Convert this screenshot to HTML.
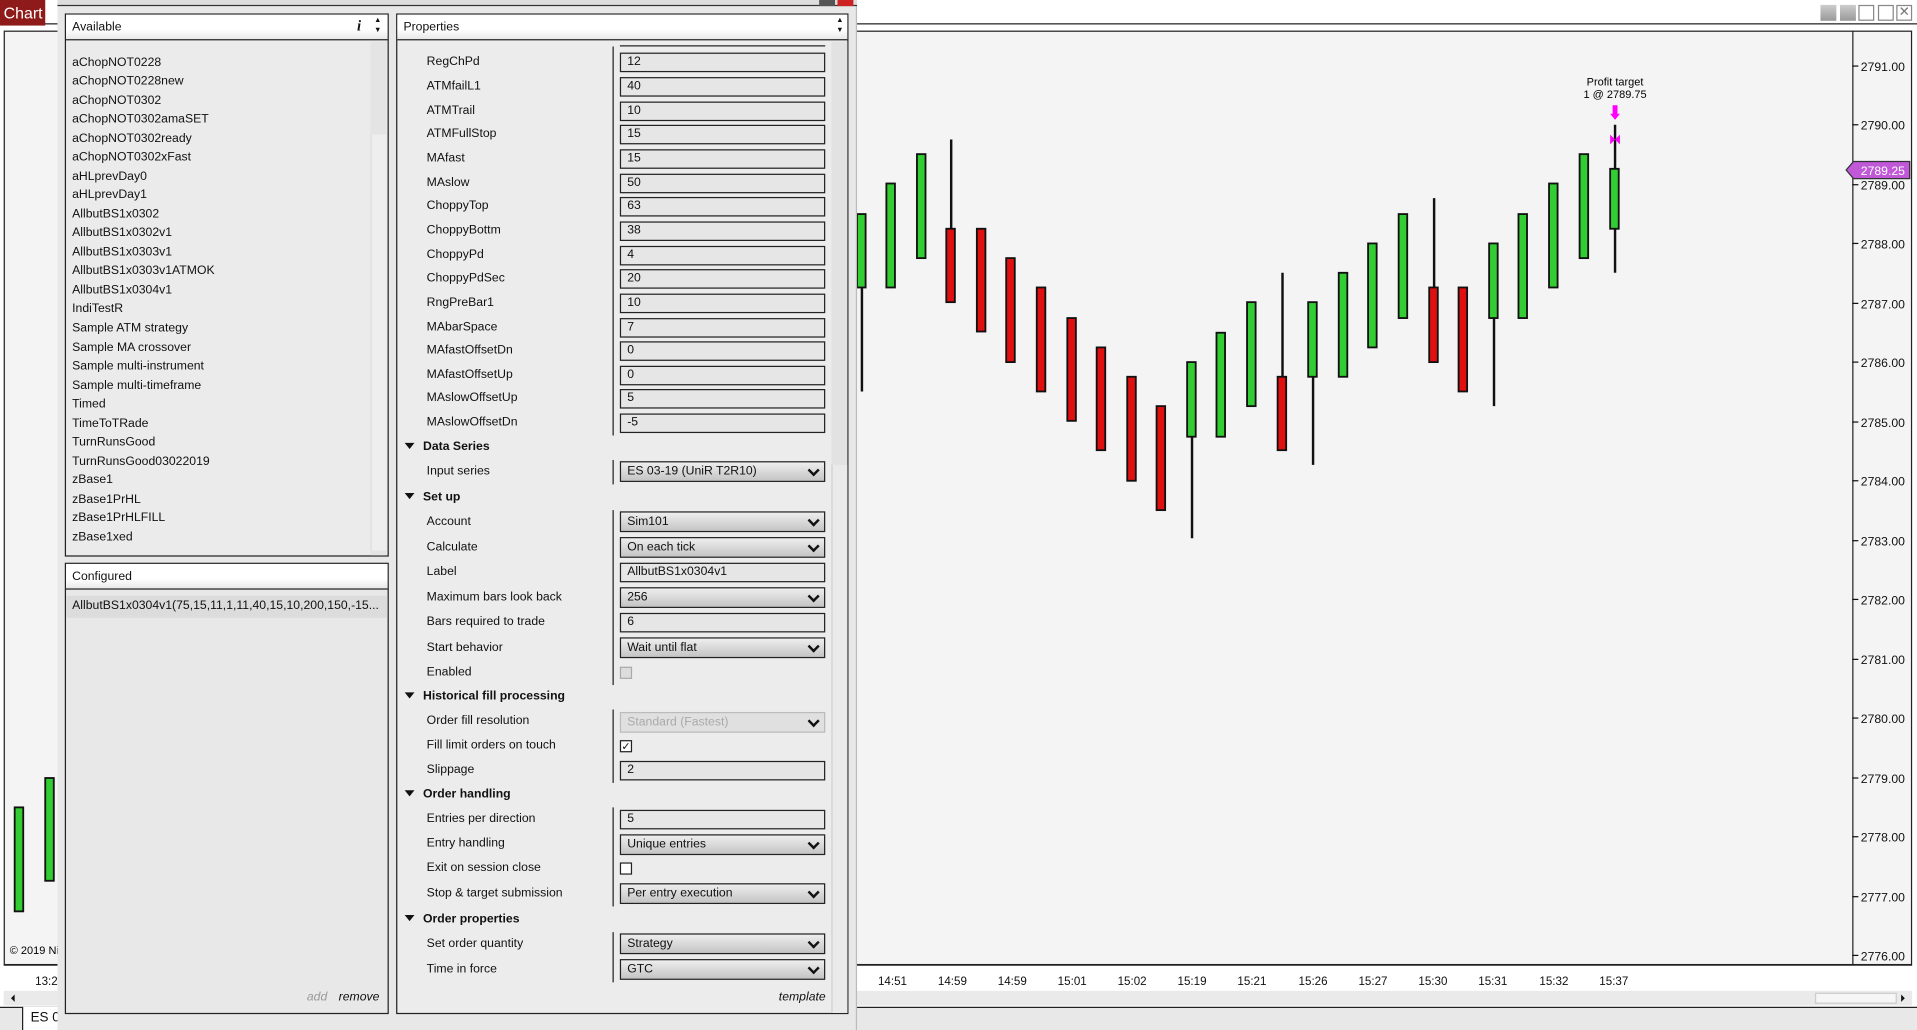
<!DOCTYPE html>
<html><head><meta charset="utf-8"><style>
*{margin:0;padding:0;box-sizing:border-box}
body{width:1917px;height:1030px;overflow:hidden;background:#fff;font-family:"Liberation Sans",Arial,sans-serif;}
#w{position:absolute;left:0;top:0;width:1568px;height:842px;transform:scale(1.2226,1.2233);transform-origin:0 0;font-size:10px;color:#111}
.a{position:absolute}
.lbl{position:absolute;left:349px;line-height:14px;white-space:nowrap}
.hdr{position:absolute;left:331px;font-weight:bold;line-height:14px;white-space:nowrap}
.hdr:before{content:"";display:inline-block;border-left:4px solid transparent;border-right:4px solid transparent;border-top:5px solid #111;margin-right:7px;vertical-align:1px}
.tb{position:absolute;left:507px;width:168px;height:16px;border:1px solid #222;background:#e6e6e6;padding-left:5px;line-height:14px}
.dd{position:absolute;left:507px;width:168px;height:17px;border:1px solid #222;background:linear-gradient(#eee,#c4c4c4);padding-left:5px;line-height:15px}
.dd:after{content:"";position:absolute;right:5px;top:3px;width:5px;height:5px;border-right:2px solid #111;border-bottom:2px solid #111;transform:rotate(45deg)}
.div{position:absolute;left:501px;width:1px;background:#222}
.li{position:absolute;left:59px;white-space:nowrap;line-height:14px}
.ph{background:linear-gradient(#fff 60%,#e8e8e8);border-bottom:1px solid #222}
</style></head><body><div id="w">
<div class="a" style="left:0;top:0;width:1568px;height:20px;background:#fff;border-bottom:1px solid #222"></div>
<div class="a" style="left:0;top:0;width:37px;height:21px;background:#8f1a1a;color:#fff;font-size:13px;line-height:21px;padding-left:3px">Chart</div>
<div class="a" style="left:1489px;top:4px;width:13px;height:13px;background:linear-gradient(#ccc,#999)"></div>
<div class="a" style="left:1505px;top:4px;width:13px;height:13px;background:linear-gradient(#ccc,#999)"></div>
<div class="a" style="left:1520px;top:4px;width:13px;height:13px;border:1px solid #888;background:#fff"></div>
<div class="a" style="left:1536px;top:4px;width:13px;height:13px;border:1px solid #888;background:#fff"></div>
<div class="a" style="left:1551px;top:4px;width:13px;height:13px;border:1px solid #888;background:#fff;font-size:11px;line-height:11px;text-align:center;color:#777">✕</div>
<div class="a" style="left:0;top:21px;width:1568px;height:821px;background:#fff"></div>
<div class="a" style="left:3px;top:25px;width:1561px;height:764px;border:1px solid #222;background:#f4f4f4"></div>
<div class="a" style="left:1515px;top:25px;width:1px;height:764px;background:#222"></div>
<svg class="a" style="left:0;top:0" width="1568" height="842" font-family="Liberation Sans,Arial,sans-serif" font-size="10">
<g stroke="#111" stroke-width="1">
<line x1="1515" y1="54" x2="1520" y2="54"/><line x1="1515" y1="102" x2="1520" y2="102"/><line x1="1515" y1="151" x2="1520" y2="151"/><line x1="1515" y1="199" x2="1520" y2="199"/><line x1="1515" y1="248" x2="1520" y2="248"/><line x1="1515" y1="296" x2="1520" y2="296"/><line x1="1515" y1="345" x2="1520" y2="345"/><line x1="1515" y1="393" x2="1520" y2="393"/><line x1="1515" y1="442" x2="1520" y2="442"/><line x1="1515" y1="490" x2="1520" y2="490"/><line x1="1515" y1="539" x2="1520" y2="539"/><line x1="1515" y1="587" x2="1520" y2="587"/><line x1="1515" y1="636" x2="1520" y2="636"/><line x1="1515" y1="684" x2="1520" y2="684"/><line x1="1515" y1="733" x2="1520" y2="733"/><line x1="1515" y1="781" x2="1520" y2="781"/>
</g>
<g fill="#111">
<text x="1522" y="58">2791.00</text><text x="1522" y="106">2790.00</text><text x="1522" y="155">2789.00</text><text x="1522" y="203">2788.00</text><text x="1522" y="252">2787.00</text><text x="1522" y="300">2786.00</text><text x="1522" y="349">2785.00</text><text x="1522" y="397">2784.00</text><text x="1522" y="446">2783.00</text><text x="1522" y="494">2782.00</text><text x="1522" y="543">2781.00</text><text x="1522" y="591">2780.00</text><text x="1522" y="640">2779.00</text><text x="1522" y="688">2778.00</text><text x="1522" y="737">2777.00</text><text x="1522" y="785">2776.00</text>
</g>
<path d="M1510 139 L1516 132 H1562 V146 H1516 Z" fill="#c058d8" stroke="#333"/>
<text x="1522" y="143" fill="#fff">2789.25</text>
<line x1="3" y1="789" x2="1564" y2="789" stroke="#222"/>
<g fill="#111" text-anchor="middle" font-size="9.5">
<text x="38" y="805">13:2</text><text x="730" y="805">14:51</text><text x="779" y="805">14:59</text><text x="828" y="805">14:59</text><text x="877" y="805">15:01</text><text x="926" y="805">15:02</text><text x="975" y="805">15:19</text><text x="1024" y="805">15:21</text><text x="1074" y="805">15:26</text><text x="1123" y="805">15:27</text><text x="1172" y="805">15:30</text><text x="1221" y="805">15:31</text><text x="1271" y="805">15:32</text><text x="1320" y="805">15:37</text>
</g>
<g stroke="#111" stroke-width="2">
<line x1="705" y1="175" x2="705" y2="320"/><line x1="778" y1="114" x2="778" y2="247"/><line x1="975" y1="296" x2="975" y2="440"/><line x1="1049" y1="223" x2="1049" y2="368"/><line x1="1074" y1="247" x2="1074" y2="380"/><line x1="1173" y1="162" x2="1173" y2="296"/><line x1="1222" y1="199" x2="1222" y2="332"/><line x1="1321" y1="102" x2="1321" y2="223"/>
</g>
<g stroke="#111" stroke-width="1.5" fill="#32cd32">
<rect x="12" y="660" width="7" height="85"/><rect x="37" y="636" width="7" height="84"/>
<rect x="701" y="175" width="7" height="60"/><rect x="725" y="150" width="7" height="85"/><rect x="750" y="126" width="7" height="85"/>
<rect x="971" y="296" width="7" height="61"/><rect x="995" y="272" width="7" height="85"/><rect x="1020" y="247" width="7" height="85"/>
<rect x="1070" y="247" width="7" height="61"/><rect x="1095" y="223" width="7" height="85"/><rect x="1119" y="199" width="7" height="85"/><rect x="1144" y="175" width="7" height="85"/>
<rect x="1218" y="199" width="7" height="61"/><rect x="1242" y="175" width="7" height="85"/><rect x="1267" y="150" width="7" height="85"/><rect x="1292" y="126" width="7" height="85"/><rect x="1317" y="138" width="7" height="49"/>
</g>
<g stroke="#111" stroke-width="1.5" fill="#e01010">
<rect x="774" y="187" width="7" height="60"/><rect x="799" y="187" width="7" height="84"/><rect x="823" y="211" width="7" height="85"/><rect x="848" y="235" width="7" height="85"/><rect x="873" y="260" width="7" height="84"/><rect x="897" y="284" width="7" height="84"/><rect x="922" y="308" width="7" height="85"/><rect x="946" y="332" width="7" height="85"/>
<rect x="1045" y="308" width="7" height="60"/><rect x="1169" y="235" width="7" height="61"/><rect x="1193" y="235" width="7" height="85"/>
</g>
<text x="1321" y="70" text-anchor="middle" font-size="9">Profit target</text>
<text x="1321" y="80" text-anchor="middle" font-size="9">1 @ 2789.75</text>
<path d="M1319 86 H1323 V93 H1325 L1321 98 L1317 93 H1319 Z" fill="#f0f"/>
<path d="M1317 110 L1321 114 L1325 110 V118 L1321 114 L1317 118 Z" fill="#f0f"/>
<rect x="3" y="810" width="1561" height="12" fill="#eaeaea"/>
<path d="M9 816 L12 813 V819 Z" fill="#111"/><path d="M1558 816 L1555 813 V819 Z" fill="#111"/>
<rect x="1485" y="812" width="66" height="8" fill="#f6f6f6" stroke="#ccc"/>
<text x="8" y="780" font-size="9">© 2019 Ni</text>
</svg>
<div class="a" style="left:0;top:823px;width:1568px;height:19px;background:#e8e8e8;border-top:1px solid #222"></div>
<div class="a" style="left:18px;top:823px;width:35px;height:19px;background:#fff;border-left:1px solid #222;border-right:1px solid #222;padding:3px 0 0 6px;font-size:11px">ES 0</div>

<div class="a" style="left:47px;top:0;width:654px;height:842px;background:#e8e8e8;border-right:1px solid #bbb"></div>
<div class="a" style="left:47px;top:0;width:654px;height:5px;background:#ddd;border-bottom:1px solid #333"></div>
<div class="a" style="left:670px;top:0;width:13px;height:5px;background:#555"></div>
<div class="a" style="left:685px;top:0;width:13px;height:5px;background:#c22"></div>

<div class="a" style="left:53px;top:11px;width:265px;height:444px;border:1px solid #222;background:#ebebeb"></div>
<div class="a ph" style="left:54px;top:12px;width:263px;height:21px"></div>
<div class="a" style="left:59px;top:16px;line-height:14px">Available</div>
<div class="a" style="left:292px;top:14px;font-style:italic;font-weight:bold;font-family:'Liberation Serif',serif;font-size:12px">i</div>
<div class="a" style="left:306px;top:13px;font-size:6px;line-height:8px">▲<br>▼</div>
<div class="a" style="left:303px;top:34px;width:13px;height:420px;background:#e4e4e4"></div>
<div class="a" style="left:303px;top:110px;width:13px;height:340px;background:#eee;border-left:1px solid #ddd"></div>
<div class="li" style="top:45px">aChopNOT0228</div>
<div class="li" style="top:60px">aChopNOT0228new</div>
<div class="li" style="top:76px">aChopNOT0302</div>
<div class="li" style="top:91px">aChopNOT0302amaSET</div>
<div class="li" style="top:107px">aChopNOT0302ready</div>
<div class="li" style="top:122px">aChopNOT0302xFast</div>
<div class="li" style="top:138px">aHLprevDay0</div>
<div class="li" style="top:153px">aHLprevDay1</div>
<div class="li" style="top:169px">AllbutBS1x0302</div>
<div class="li" style="top:184px">AllbutBS1x0302v1</div>
<div class="li" style="top:200px">AllbutBS1x0303v1</div>
<div class="li" style="top:215px">AllbutBS1x0303v1ATMOK</div>
<div class="li" style="top:231px">AllbutBS1x0304v1</div>
<div class="li" style="top:246px">IndiTestR</div>
<div class="li" style="top:262px">Sample ATM strategy</div>
<div class="li" style="top:278px">Sample MA crossover</div>
<div class="li" style="top:293px">Sample multi-instrument</div>
<div class="li" style="top:309px">Sample multi-timeframe</div>
<div class="li" style="top:324px">Timed</div>
<div class="li" style="top:340px">TimeToTRade</div>
<div class="li" style="top:355px">TurnRunsGood</div>
<div class="li" style="top:371px">TurnRunsGood03022019</div>
<div class="li" style="top:386px">zBase1</div>
<div class="li" style="top:402px">zBase1PrHL</div>
<div class="li" style="top:417px">zBase1PrHLFILL</div>
<div class="li" style="top:433px">zBase1xed</div>

<div class="a" style="left:53px;top:460px;width:265px;height:369px;border:1px solid #222;background:#e8e8e8"></div>
<div class="a ph" style="left:54px;top:461px;width:263px;height:21px"></div>
<div class="a" style="left:59px;top:465px;line-height:14px">Configured</div>
<div class="a" style="left:54px;top:487px;width:263px;height:18px;background:#dcdcdc"></div>
<div class="a" style="left:59px;top:489px;width:252px;overflow:hidden;line-height:14px;white-space:nowrap">AllbutBS1x0304v1(75,15,11,1,11,40,15,10,200,150,-15...</div>
<div class="a" style="left:251px;top:809px;font-style:italic;color:#999;line-height:14px">add</div>
<div class="a" style="left:277px;top:809px;font-style:italic;line-height:14px">remove</div>

<div class="a" style="left:324px;top:11px;width:370px;height:818px;border:1px solid #222;background:#ececec"></div>
<div class="a ph" style="left:325px;top:12px;width:368px;height:21px"></div>
<div class="a" style="left:330px;top:16px;line-height:14px">Properties</div>
<div class="a" style="left:684px;top:13px;font-size:6px;line-height:8px">▲<br>▼</div>
<div class="a" style="left:680px;top:34px;width:13px;height:794px;background:#e2e2e2"></div>
<div class="a" style="left:680px;top:380px;width:13px;height:448px;background:#eaeaea;border-left:1px solid #d0d0d0"></div>
<div class="a" style="left:507px;top:37px;width:168px;height:2px;border-top:1px solid #222"></div>
<div class="div" style="top:38px;height:318px"></div>
<div class="div" style="top:376px;height:20px"></div>
<div class="div" style="top:417px;height:143px"></div>
<div class="div" style="top:580px;height:60px"></div>
<div class="div" style="top:660px;height:81px"></div>
<div class="div" style="top:762px;height:41px"></div>

<div class="lbl" style="top:44px">RegChPd</div><div class="tb" style="top:43px">12</div>
<div class="lbl" style="top:64px">ATMfailL1</div><div class="tb" style="top:63px">40</div>
<div class="lbl" style="top:84px">ATMTrail</div><div class="tb" style="top:83px">10</div>
<div class="lbl" style="top:103px">ATMFullStop</div><div class="tb" style="top:102px">15</div>
<div class="lbl" style="top:123px">MAfast</div><div class="tb" style="top:122px">15</div>
<div class="lbl" style="top:143px">MAslow</div><div class="tb" style="top:142px">50</div>
<div class="lbl" style="top:162px">ChoppyTop</div><div class="tb" style="top:161px">63</div>
<div class="lbl" style="top:182px">ChoppyBottm</div><div class="tb" style="top:181px">38</div>
<div class="lbl" style="top:202px">ChoppyPd</div><div class="tb" style="top:201px">4</div>
<div class="lbl" style="top:221px">ChoppyPdSec</div><div class="tb" style="top:220px">20</div>
<div class="lbl" style="top:241px">RngPreBar1</div><div class="tb" style="top:240px">10</div>
<div class="lbl" style="top:261px">MAbarSpace</div><div class="tb" style="top:260px">7</div>
<div class="lbl" style="top:280px">MAfastOffsetDn</div><div class="tb" style="top:279px">0</div>
<div class="lbl" style="top:300px">MAfastOffsetUp</div><div class="tb" style="top:299px">0</div>
<div class="lbl" style="top:319px">MAslowOffsetUp</div><div class="tb" style="top:318px">5</div>
<div class="lbl" style="top:339px">MAslowOffsetDn</div><div class="tb" style="top:338px">-5</div>
<div class="hdr" style="top:359px">Data Series</div>
<div class="lbl" style="top:379px">Input series</div><div class="dd" style="top:377px">ES 03-19 (UniR T2R10)</div>
<div class="hdr" style="top:400px">Set up</div>
<div class="lbl" style="top:420px">Account</div><div class="dd" style="top:418px">Sim101</div>
<div class="lbl" style="top:441px">Calculate</div><div class="dd" style="top:439px">On each tick</div>
<div class="lbl" style="top:461px">Label</div><div class="tb" style="top:460px">AllbutBS1x0304v1</div>
<div class="lbl" style="top:482px">Maximum bars look back</div><div class="dd" style="top:480px">256</div>
<div class="lbl" style="top:502px">Bars required to trade</div><div class="tb" style="top:501px">6</div>
<div class="lbl" style="top:523px">Start behavior</div><div class="dd" style="top:521px">Wait until flat</div>
<div class="lbl" style="top:543px">Enabled</div><div class="a" style="left:507px;top:545px;width:10px;height:10px;border:1px solid #aaa;background:#ddd"></div>
<div class="hdr" style="top:563px">Historical fill processing</div>
<div class="lbl" style="top:583px">Order fill resolution</div><div class="dd" style="top:582px;color:#aaa;border-color:#bbb;background:#e0e0e0">Standard (Fastest)</div>
<div class="lbl" style="top:603px">Fill limit orders on touch</div><div class="a" style="left:507px;top:605px;width:10px;height:10px;border:1px solid #222;background:#fff;font-size:9px;line-height:8px;text-align:center">✓</div>
<div class="lbl" style="top:623px">Slippage</div><div class="tb" style="top:622px">2</div>
<div class="hdr" style="top:643px">Order handling</div>
<div class="lbl" style="top:663px">Entries per direction</div><div class="tb" style="top:662px">5</div>
<div class="lbl" style="top:683px">Entry handling</div><div class="dd" style="top:682px">Unique entries</div>
<div class="lbl" style="top:703px">Exit on session close</div><div class="a" style="left:507px;top:705px;width:10px;height:10px;border:1px solid #222;background:#fff"></div>
<div class="lbl" style="top:724px">Stop &amp; target submission</div><div class="dd" style="top:722px">Per entry execution</div>
<div class="hdr" style="top:745px">Order properties</div>
<div class="lbl" style="top:765px">Set order quantity</div><div class="dd" style="top:763px">Strategy</div>
<div class="lbl" style="top:786px">Time in force</div><div class="dd" style="top:784px">GTC</div>
<div class="a" style="left:637px;top:809px;font-style:italic;line-height:14px">template</div>
</div></body></html>
